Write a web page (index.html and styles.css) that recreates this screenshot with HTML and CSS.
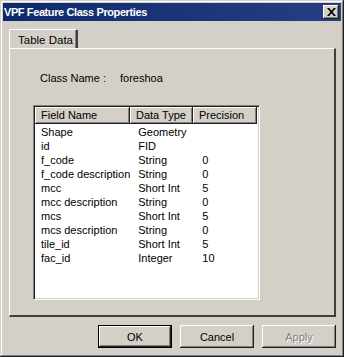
FILE: index.html
```html
<!DOCTYPE html>
<html lang="en">
<head>
    <meta charset="UTF-8">
    <title>VPF Feature Class Properties</title>
    <link rel="stylesheet" href="styles.css">
</head>
<body>
    <div class="window">
        <div class="titlebar">
            <span class="title">VPF Feature Class Properties</span>
            <button class="close-btn" aria-label="Close">
                <svg width="9" height="8" viewBox="0 0 9 8"><path d="M0 0h2.2l2.3 2.8L6.8 0H9L5.6 4 9 8H6.8L4.5 5.2 2.2 8H0l3.4-4z" fill="#000"/></svg>
            </button>
        </div>
        <div class="tabs">
            <div class="tab">Table Data</div>
        </div>
        <div class="panel">
            <div class="class-name">
                <span class="label">Class Name :</span>
                <span class="value">foreshoa</span>
            </div>
            <div class="list">
                <div class="list-header">
                    <div class="col col-name">Field Name</div>
                    <div class="col col-type">Data Type</div>
                    <div class="col col-prec">Precision</div>
                </div>
                <table class="rows">
                    <tr><td class="c1">Shape</td><td class="c2">Geometry</td><td class="c3"></td></tr>
                    <tr><td class="c1">id</td><td class="c2">FID</td><td class="c3"></td></tr>
                    <tr><td class="c1">f_code</td><td class="c2">String</td><td class="c3">0</td></tr>
                    <tr><td class="c1">f_code description</td><td class="c2">String</td><td class="c3">0</td></tr>
                    <tr><td class="c1">mcc</td><td class="c2">Short Int</td><td class="c3">5</td></tr>
                    <tr><td class="c1">mcc description</td><td class="c2">String</td><td class="c3">0</td></tr>
                    <tr><td class="c1">mcs</td><td class="c2">Short Int</td><td class="c3">5</td></tr>
                    <tr><td class="c1">mcs description</td><td class="c2">String</td><td class="c3">0</td></tr>
                    <tr><td class="c1">tile_id</td><td class="c2">Short Int</td><td class="c3">5</td></tr>
                    <tr><td class="c1">fac_id</td><td class="c2">Integer</td><td class="c3">10</td></tr>
                </table>
            </div>
        </div>
        <div class="buttons">
            <button class="btn btn-default">OK</button>
            <button class="btn">Cancel</button>
            <button class="btn btn-disabled">Apply</button>
        </div>
    </div>
</body>
</html>
```

FILE: styles.css
```css
:root {
    --face: #d4d0c8;
    --light: #ffffff;
    --shadow: #808080;
    --dark: #404040;
}

body {
    margin: 0;
    font-family: 'Liberation Sans', Arial, sans-serif;
    font-size: 11px;
    color: #000;
}

.window {
    width: 344px;
    height: 357px;
    box-sizing: border-box;
    background: var(--face);
    padding: 3px;
    box-shadow: inset -1px -1px 0 #202020, inset 1px 1px 0 var(--face), inset -2px -2px 0 var(--shadow), inset 2px 2px 0 var(--light);
}

.titlebar {
    height: 18px;
    display: flex;
    align-items: center;
    justify-content: space-between;
    padding: 0 2px 0 1px;
    background: linear-gradient(90deg, #0e2a6c 0%, #243f83 100%);
}

.title {
    color: #fff;
    font-weight: bold;
    font-size: 11px;
    letter-spacing: -0.4px;
}

.close-btn {
    width: 16px;
    height: 14px;
    padding: 0;
    border: none;
    background: var(--face);
    display: flex;
    align-items: center;
    justify-content: center;
    box-shadow: inset -1px -1px 0 #202020, inset 1px 1px 0 var(--light), inset -2px -2px 0 var(--shadow);
}

.tabs {
    display: flex;
    padding: 8px 0 0 6px;
}

.tab {
    width: 69px;
    height: 19px;
    box-sizing: border-box;
    padding: 4px 0 0 8px;
    font-size: 11.5px;
    border-top: 1px solid var(--light);
    border-left: 1px solid var(--light);
    border-right: 2px solid var(--dark);
    border-radius: 2px 2px 0 0;
    box-shadow: inset -1px 0 0 var(--shadow);
}

.panel {
    margin: 0 5px 0 6px;
    height: 269px;
    box-sizing: border-box;
    border-top: 1px solid var(--light);
    border-left: 1px solid var(--light);
    border-right: 2px solid var(--dark);
    border-bottom: 2px solid var(--dark);
}

.class-name {
    display: flex;
    padding: 23px 0 0 30px;
    height: 33px;
}

.class-name .label {
    width: 80px;
}

.list {
    margin-left: 23px;
    width: 227px;
    height: 195px;
    box-sizing: border-box;
    background: #fff;
    border-top: 1px solid var(--shadow);
    border-left: 1px solid var(--shadow);
    border-right: 1px solid var(--light);
    border-bottom: 1px solid var(--light);
    box-shadow: inset 1px 1px 0 #202020, inset -1px -1px 0 var(--face);
    padding: 1px;
}

.list-header {
    display: flex;
    height: 17px;
}

.col {
    box-sizing: border-box;
    background: var(--face);
    padding: 2px 0 0 6px;
    box-shadow: inset -1px -1px 0 #202020, inset 1px 1px 0 var(--light), inset -2px -2px 0 var(--shadow);
}

.col-name { width: 95px; }
.col-type { width: 63px; }
.col-prec { width: 64px; }

.rows {
    border-collapse: collapse;
    margin-top: 1px;
}

.rows td {
    height: 14px;
    padding: 0 0 0 6px;
    line-height: 14px;
    white-space: nowrap;
}

.rows .c1 { width: 89px; }
.rows .c2 { width: 57px; padding-left: 8px; }
.rows .c3 { padding-left: 7px; }

.buttons {
    display: flex;
    justify-content: flex-end;
    gap: 8px;
    padding: 8px 5px 0 0;
}

.btn {
    width: 74px;
    height: 23px;
    border: none;
    background: var(--face);
    font-family: 'Liberation Sans', Arial, sans-serif;
    font-size: 11px;
    color: #000;
    padding: 0;
    box-shadow: inset -1px -1px 0 #202020, inset 1px 1px 0 var(--light), inset -2px -2px 0 var(--shadow);
}

.btn-default {
    box-shadow: inset 0 0 0 1px #000, inset -2px -2px 0 #202020, inset 2px 2px 0 var(--light), inset -3px -3px 0 var(--shadow);
}

.btn-disabled {
    color: var(--shadow);
    text-shadow: 1px 1px 0 var(--light);
}
```
